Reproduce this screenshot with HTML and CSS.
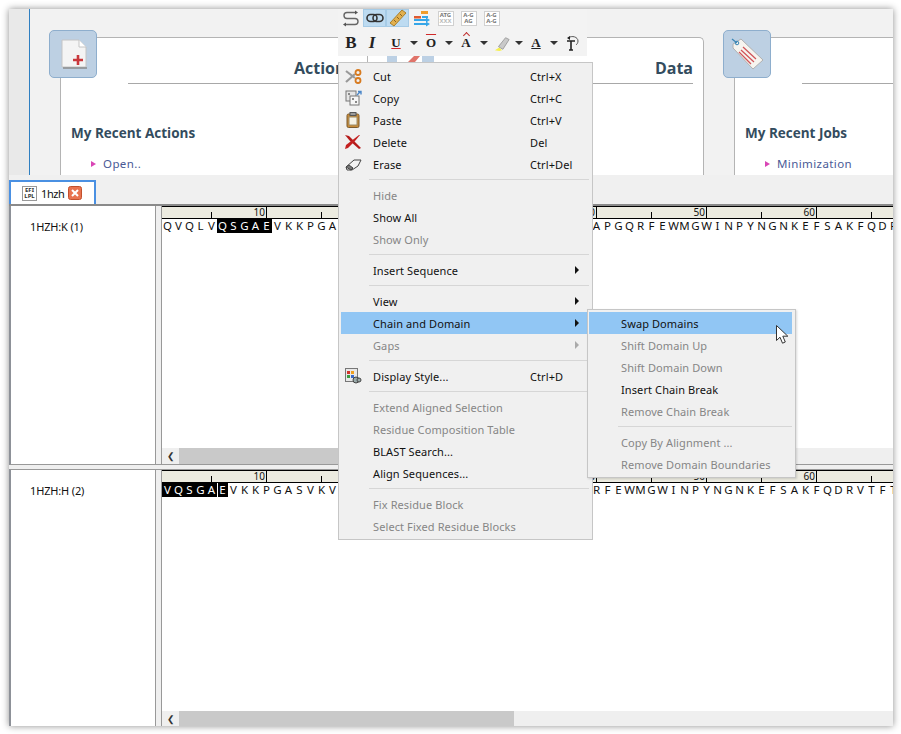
FILE: index.html
```html
<!DOCTYPE html>
<html lang="en">
<head>
<meta charset="utf-8">
<title>1hzh</title>
<link rel="stylesheet" href="styles.css">
</head>
<body>
<div class="window">
  <section class="top">
    <div class="strip"></div>
    <div class="card card-main">
      <div class="badge">
        <svg width="48" height="48" viewBox="0 0 48 48"><path d="M13 10h17l7 7v20H13z" fill="#f4f4f4" stroke="#c4c4c4"/><path d="M14 38h24" stroke="#8b8b8b" stroke-width="1.5"/><path d="M30 10v7h7" fill="#fff" stroke="#c4c4c4"/><path d="M24 30h10M29 25v10" stroke="#c9383c" stroke-width="2.6"/></svg>
      </div>
      <div class="card-head"><span>Actions</span><span>Data</span></div>
      <h3 class="recent">My Recent Actions</h3>
      <a class="recent-link"><i class="tri"></i>Open..</a>
    </div>
    <div class="card card-side">
      <div class="badge">
        <svg width="48" height="48" viewBox="0 0 48 48"><path d="M10 14l8-5 22 21-10 9-20-21z" fill="#f6f4ef" stroke="#b0b0b0"/><path d="M20 17l13 12M18 20l13 12M16 22l12 12" stroke="#d0555a" stroke-width="1.3"/><circle cx="14" cy="13" r="1.8" fill="none" stroke="#3b86b5"/><path d="M9 9l5 4" stroke="#3b86b5" stroke-width="1.3"/></svg>
      </div>
      <div class="card-head"></div>
      <h3 class="recent recent-side">My Recent Jobs</h3>
      <a class="recent-link recent-link-side"><i class="tri"></i>Minimization</a>
    </div>
  </section>

  <nav class="tabs">
    <div class="tab">
      <span class="tab-icon">EFI<br>LPL</span>
      <span class="tab-name">1hzh</span>
      <svg class="tab-close" width="14" height="14" viewBox="0 0 14 14"><rect x=".5" y=".5" width="13" height="13" rx="2" fill="#e8734f" stroke="#c2502c"/><path d="M4 4l6 6M10 4l-6 6" stroke="#fff" stroke-width="2"/></svg>
    </div>
  </nav>

  <div class="panes">
    <div class="pane pane-a">
      <div class="names">1HZH:K (1)</div>
      <div class="seq">
        <div class="ruler"><b>10</b><b>20</b><b>30</b><b>40</b><b>50</b><b>60</b><b></b></div>
        <div class="letters"><i>Q</i><i>V</i><i>Q</i><i>L</i><i>V</i><i class="on">Q</i><i class="on">S</i><i class="on">G</i><i class="on">A</i><i class="on">E</i><i>V</i><i>K</i><i>K</i><i>P</i><i>G</i><i>A</i><i>S</i><i>V</i><i>K</i><i>V</i><i>S</i><i>C</i><i>K</i><i>A</i><i>S</i><i>G</i><i>Y</i><i>Q</i><i>F</i><i>T</i><i>S</i><i>Y</i><i>R</i><i>M</i><i>H</i><i>W</i><i>V</i><i>R</i><i>Q</i><i>A</i><i>P</i><i>G</i><i>Q</i><i>R</i><i>F</i><i>E</i><i>W</i><i>M</i><i>G</i><i>W</i><i>I</i><i>N</i><i>P</i><i>Y</i><i>N</i><i>G</i><i>N</i><i>K</i><i>E</i><i>F</i><i>S</i><i>A</i><i>K</i><i>F</i><i>Q</i><i>D</i><i>R</i></div>
        <div class="scroll"><span class="scroll-btn">&#10094;</span><span class="thumb"></span></div>
      </div>
    </div>
    <div class="pane pane-b">
      <div class="names">1HZH:H (2)</div>
      <div class="seq">
        <div class="ruler"><b>10</b><b>20</b><b>30</b><b>40</b><b>50</b><b>60</b><b></b></div>
        <div class="letters"><i class="on">V</i><i class="on">Q</i><i class="on">S</i><i class="on">G</i><i class="on">A</i><i class="on caret">E</i><i>V</i><i>K</i><i>K</i><i>P</i><i>G</i><i>A</i><i>S</i><i>V</i><i>K</i><i>V</i><i>S</i><i>C</i><i>K</i><i>A</i><i>S</i><i>G</i><i>Y</i><i>Q</i><i>F</i><i>T</i><i>S</i><i>Y</i><i>R</i><i>M</i><i>H</i><i>W</i><i>V</i><i>R</i><i>Q</i><i>A</i><i>P</i><i>G</i><i>Q</i><i>R</i><i>F</i><i>E</i><i>W</i><i>M</i><i>G</i><i>W</i><i>I</i><i>N</i><i>P</i><i>Y</i><i>N</i><i>G</i><i>N</i><i>K</i><i>E</i><i>F</i><i>S</i><i>A</i><i>K</i><i>F</i><i>Q</i><i>D</i><i>R</i><i>V</i><i>T</i><i>F</i><i>T</i></div>
        <div class="scroll scroll-low"><span class="scroll-btn">&#10094;</span><span class="thumb"></span></div>
      </div>
    </div>
  </div>
</div>

<svg class="peek" width="70" height="6" viewBox="0 0 70 6"><rect width="70" height="6" fill="#fff"/><path d="M.5 0v6" stroke="#b5b5b5"/><rect x="20" width="10" height="6" fill="#bcd0e4"/><rect x="55" width="12" height="6" fill="#bcd0e4"/><path d="M41 6l6-6h6l-5 6z" fill="#e0746a"/></svg>

<div class="toolbar">
  <div class="tb-row tb-row-1">
    <span class="tb-i tb-w1"><svg width="18" height="17" viewBox="0 0 18 17"><path d="M12 2.500H4C0 2.500 0 8.500 4 8.500h8c4 0 4 6 0 6H3" fill="none" stroke="#666" stroke-width="1.400"/><path d="M3 12.500l-3 2 3 2zM12 .5l3 2-3 2z" fill="#555"/></svg></span>
    <span class="tb-i tb-w2 tb-on"><svg width="18" height="12" viewBox="0 0 18 12"><rect x="1" y="2.500" width="10" height="7" rx="3.500" fill="none" stroke="#333" stroke-width="1.600"/><rect x="7" y="2.500" width="10" height="7" rx="3.500" fill="none" stroke="#333" stroke-width="1.600"/></svg></span>
    <span class="tb-i tb-w2 tb-on"><svg width="18" height="18" viewBox="0 0 18 18"><path d="M1 14L13 1l4 3L5 17z" fill="#e2b04e" stroke="#a87f2c"/><path d="M5 11l2 2M8 8l2 2M11 5l2 2" stroke="#8a6420"/></svg></span>
    <span class="tb-i tb-w3"><svg width="17" height="17" viewBox="0 0 17 17"><rect x="8" y="1" width="7" height="3" fill="#ef9c2c"/><rect x="1" y="6" width="7" height="2.500" fill="#e05a30"/><path d="M9 7h6M1 10h13M1 14h13" stroke="#36a6e8" stroke-width="2.200"/><path d="M13 7.500l4 2.500-4 2.500zM13 11.500l4 2.500-4 2.500z" fill="#36a6e8"/></svg></span>
    <span class="tb-i tb-w4"><span class="tb-box">ATG<br><em>XXX</em></span></span>
    <span class="tb-i tb-w4"><span class="tb-box">A-G<br>AG</span></span>
    <span class="tb-i tb-w4"><span class="tb-box">A-G<br>A-G</span></span>
  </div>
  <div class="tb-row tb-row-2">
    <span class="tb-t tb-bold">B</span>
    <span class="tb-t tb-ital">I</span>
    <span class="tb-t tb-small tb-u">U</span><i class="drop"></i>
    <span class="tb-t tb-small tb-o">O</span><i class="drop"></i>
    <span class="tb-t tb-small tb-hat">A</span><i class="drop"></i>
    <span class="tb-t"><svg width="16" height="17" viewBox="0 0 18 17"><path d="M1 16l5-3 3 3-3 1z" fill="#f6f04a"/><path d="M5 12l8-10 4 2-7 11z" fill="#c9c9c9" stroke="#999"/></svg></span><i class="drop"></i>
    <span class="tb-t tb-small tb-a">A</span><i class="drop"></i>
    <span class="tb-t"><svg width="16" height="17" viewBox="0 0 16 17"><path d="M3 6h8M7 6v9M5 15h4" fill="none" stroke="#222" stroke-width="1.600"/><path d="M4 3c4-3 10-1 10 3 0 2-1 3-2 4" fill="none" stroke="#555"/><path d="M6 1L3 3l3 2z" fill="#222"/></svg></span>
  </div>
</div>

<div class="menu">
  <div class="mi"><span class="mi-ic"><svg width="17" height="15" viewBox="0 0 17 15"><path d="M1 2l9 7M1 13l9-8" stroke="#999" stroke-width="2.200"/><circle cx="13" cy="3.500" r="2.500" fill="none" stroke="#d77a1f" stroke-width="1.800"/><circle cx="13" cy="11.500" r="2.500" fill="none" stroke="#d77a1f" stroke-width="1.800"/></svg></span><span class="mi-l">Cut</span><span class="mi-k">Ctrl+X</span></div>
  <div class="mi"><span class="mi-ic"><svg width="17" height="16" viewBox="0 0 17 16"><rect x="1" y="1" width="10" height="10" fill="#e6e6e6" stroke="#777"/><rect x="5" y="6" width="9" height="9" fill="#f6f6f6" stroke="#777"/><path d="M3 3h2v2H3zM7 8h2v2H7zM10 11h2v2h-2z" fill="#888"/><path d="M12 5l3-3M13 1.500h3v3" fill="none" stroke="#4a86c8" stroke-width="1.400"/></svg></span><span class="mi-l">Copy</span><span class="mi-k">Ctrl+C</span></div>
  <div class="mi"><span class="mi-ic"><svg width="14" height="16" viewBox="0 0 14 16"><rect x="1" y="2" width="12" height="13.500" rx="1.500" fill="#c88a36" stroke="#7a5a2e"/><rect x="3" y="5" width="8" height="8" fill="#f5f1e4" stroke="#9a8a66"/><rect x="4" y="0.500" width="6" height="3" fill="#9a9a9a" stroke="#555"/></svg></span><span class="mi-l">Paste</span><span class="mi-k">Ctrl+V</span></div>
  <div class="mi"><span class="mi-ic"><svg width="16" height="16" viewBox="0 0 16 16"><path d="M0 1l4 1 12 12-2 1L5 7z" fill="#b51a1a"/><path d="M15 1l-1 0L1 11l-1 4 3-1 7-7z" fill="#c42020"/></svg></span><span class="mi-l">Delete</span><span class="mi-k">Del</span></div>
  <div class="mi"><span class="mi-ic"><svg width="17" height="13" viewBox="0 0 17 13"><path d="M1 9l8-7h7l-3 6-6 4H2z" fill="#f4f4f4" stroke="#444"/><path d="M1 9l5 3 2-2-4-3z" fill="#777" stroke="#444"/></svg></span><span class="mi-l">Erase</span><span class="mi-k">Ctrl+Del</span></div>
  <div class="ms"></div>
  <div class="mi off"><span class="mi-ic"></span><span class="mi-l">Hide</span></div>
  <div class="mi"><span class="mi-ic"></span><span class="mi-l">Show All</span></div>
  <div class="mi off"><span class="mi-ic"></span><span class="mi-l">Show Only</span></div>
  <div class="ms"></div>
  <div class="mi"><span class="mi-ic"></span><span class="mi-l">Insert Sequence</span><i class="mi-a"></i></div>
  <div class="ms"></div>
  <div class="mi"><span class="mi-ic"></span><span class="mi-l">View</span><i class="mi-a"></i></div>
  <div class="mi hot"><span class="mi-ic"></span><span class="mi-l">Chain and Domain</span><i class="mi-a"></i></div>
  <div class="mi off"><span class="mi-ic"></span><span class="mi-l">Gaps</span><i class="mi-a"></i></div>
  <div class="ms"></div>
  <div class="mi"><span class="mi-ic"><svg width="17" height="16" viewBox="0 0 17 16"><rect x=".5" y=".5" width="12" height="13" fill="#e8e8e8" stroke="#777"/><path d="M2 3h3v3H2z" fill="#d0342c"/><path d="M6 3h3v3H6z" fill="#f0a020"/><path d="M2 7h3v3H2z" fill="#3a9a40"/><path d="M6 7h3v3H6z" fill="#3a6ac8"/><circle cx="11" cy="12" r="3" fill="#9aa" stroke="#444"/><circle cx="14" cy="12" r="2" fill="#9aa" stroke="#444"/></svg></span><span class="mi-l">Display Style...</span><span class="mi-k">Ctrl+D</span></div>
  <div class="ms"></div>
  <div class="mi off"><span class="mi-ic"></span><span class="mi-l">Extend Aligned Selection</span></div>
  <div class="mi off"><span class="mi-ic"></span><span class="mi-l">Residue Composition Table</span></div>
  <div class="mi"><span class="mi-ic"></span><span class="mi-l">BLAST Search...</span></div>
  <div class="mi"><span class="mi-ic"></span><span class="mi-l">Align Sequences...</span></div>
  <div class="ms"></div>
  <div class="mi off"><span class="mi-ic"></span><span class="mi-l">Fix Residue Block</span></div>
  <div class="mi off"><span class="mi-ic"></span><span class="mi-l">Select Fixed Residue Blocks</span></div>
</div>

<div class="menu submenu">
  <div class="mi hot"><span class="mi-ic"></span><span class="mi-l">Swap Domains</span></div>
  <div class="mi off"><span class="mi-ic"></span><span class="mi-l">Shift Domain Up</span></div>
  <div class="mi off"><span class="mi-ic"></span><span class="mi-l">Shift Domain Down</span></div>
  <div class="mi"><span class="mi-ic"></span><span class="mi-l">Insert Chain Break</span></div>
  <div class="mi off"><span class="mi-ic"></span><span class="mi-l">Remove Chain Break</span></div>
  <div class="ms"></div>
  <div class="mi off"><span class="mi-ic"></span><span class="mi-l">Copy By Alignment ...</span></div>
  <div class="mi off"><span class="mi-ic"></span><span class="mi-l">Remove Domain Boundaries</span></div>
</div>

<svg class="pointer" width="14" height="20" viewBox="0 0 14 20"><path d="M.5.5v15l3.500-3.300 2.500 6 2.800-1.200-2.500-5.800h5z" fill="#fff" stroke="#333"/></svg>
</body>
</html>
```

FILE: styles.css
```css
* { box-sizing: border-box; }
html, body { margin: 0; height: 100%; }
body {
  position: relative;
  width: 901px;
  height: 734px;
  overflow: hidden;
  padding: 9px 8px 8px 9px;
  background: #fff;
  font-family: "Noto Sans", sans-serif;
  font-size: 11px;
  color: #111;
}
.window {
  display: flex;
  flex-direction: column;
  width: 884px;
  height: 717px;
  background: #f0f0f0;
  box-shadow: 0 0 7px rgba(0, 0, 0, .45);
}

/* top welcome area */
.top {
  display: flex;
  flex: 0 0 166px;
  overflow: hidden;
  background: #f2f2f2;
}
.strip {
  flex: 0 0 21px;
  margin-right: 30px;
  background: #e9e9e9;
  border-right: 1px solid #2f7fc1;
}
.card {
  position: relative;
  flex: none;
  margin-top: 28px;
  height: 160px;
  background: #fff;
  border: 1px solid #b4b4b4;
  border-bottom: 0;
  border-radius: 0 5px 0 0;
}
.card-main { width: 644px; margin-right: 30px; }
.card-side { width: 180px; border-right: 0; }
.badge {
  position: absolute;
  left: -12px;
  top: -8px;
  width: 48px;
  height: 48px;
  background: #bdd0e3;
  border: 1px solid #8eaecd;
  border-radius: 5px;
}
.badge svg { display: block; margin: -1px; }
.card-head {
  display: flex;
  justify-content: space-between;
  align-items: flex-end;
  height: 46px;
  margin: 0 10px 0 67px;
  padding: 0 0 4px 166px;
  border-bottom: 1px solid #a8a8a8;
  font-family: "Open Sans", sans-serif;
  font-size: 16px;
  font-weight: 700;
  color: #334c5e;
}
.card-side .card-head { margin-right: 0; }
.recent {
  margin: 40px 0 0 10px;
  font-family: "Open Sans", sans-serif;
  font-size: 13.500px;
  font-weight: 700;
  line-height: 18px;
  color: #334c5e;
}
.recent-link {
  display: flex;
  align-items: center;
  margin: 14px 0 0 30px;
  line-height: 16px;
  font-size: 11.500px;
  letter-spacing: .4px;
  color: #4a5a96;
}
.tri {
  width: 0;
  height: 0;
  margin-right: 7px;
  border-left: 5px solid #d945b5;
  border-top: 3px solid transparent;
  border-bottom: 3px solid transparent;
}

/* tab strip */
.tabs {
  display: flex;
  flex: 0 0 29px;
  padding-top: 5px;
  background: #f0f0f0;
}
.tab {
  display: flex;
  align-items: center;
  width: 87px;
  height: 24px;
  padding: 0 0 0 11px;
  background: #fff;
  border: 2px solid #4a90e2;
  border-bottom: 0;
}
.tab-icon {
  width: 15px;
  height: 15px;
  border: 1px solid #999;
  font-size: 6px;
  font-weight: 700;
  line-height: 6.500px;
  text-align: center;
  color: #333;
}
.tab-name {
  width: 22px;
  margin: 0 5px 0 4px;
  font-size: 11px;
  letter-spacing: -.4px;
  color: #111;
}

/* sequence panes */
.panes {
  display: flex;
  flex-direction: column;
  flex: 1;
  min-height: 0;
  border-top: 2px solid #8a8a8a;
  background: #efefef;
}
.pane {
  display: flex;
  min-height: 0;
  border-left: 2px solid #8d9198;
}
.pane-a { flex: 0 0 259px; border-bottom: 1px solid #999; margin-bottom: 4px; }
.pane-b { flex: 1; border-top: 1px solid #999; }
.names {
  flex: 0 0 145px;
  padding: 13px 0 0 19px;
  background: #fff;
  border-right: 1px solid #999;
  font-size: 11px;
  letter-spacing: -.15px;
  line-height: 15px;
  color: #111;
}
.seq {
  display: flex;
  flex-direction: column;
  flex: 1;
  min-width: 0;
  margin-left: 5px;
  overflow: hidden;
  background: #fff;
  border-left: 1px solid #999;
}
.ruler {
  display: flex;
  flex: 0 0 13px;
  margin-left: -5px;
  background: #ecebe0;
  border-top: 1px solid #000;
  border-bottom: 1px solid #000;
}
.ruler b {
  flex: 0 0 110px;
  height: 11px;
  padding-right: 1px;
  border-right: 1px solid #000;
  background: linear-gradient(#000, #000) no-repeat 54px 100% / 1px 6px;
  font-size: 10px;
  font-weight: 400;
  line-height: 11px;
  text-align: right;
  color: #111;
}
.letters {
  display: flex;
  flex: 1;
  align-items: flex-start;
}
.letters i {
  flex: 0 0 11px;
  height: 14px;
  font-size: 11.500px;
  font-style: normal;
  line-height: 14px;
  text-align: center;
  color: #111;
}
.letters .on { background: #000; color: #fff; }
.letters .caret { box-shadow: inset 1px 0 #fff; }
.scroll {
  display: flex;
  flex: 0 0 16px;
  background: #efefef;
}
.scroll-low { flex-basis: 14px; }
.scroll-btn {
  flex: 0 0 17px;
  font-size: 9px;
  line-height: 15px;
  text-align: center;
  color: #333;
}
.thumb { flex: 0 0 335px; background: #c9c9c9; }

/* floating toolbar */
.peek { position: absolute; left: 367px; top: 56px; }
.toolbar {
  position: absolute;
  left: 338px;
  top: 9px;
  width: 249px;
  height: 47px;
  background: #f3f3f3;
}
.tb-row { display: flex; align-items: center; }
.tb-row-1 { height: 18px; padding-left: 3px; }
.tb-row-2 { height: 20px; margin-top: 6px; padding-left: 4px; }
.tb-i { display: flex; align-items: center; justify-content: center; height: 18px; }
.tb-w1 { width: 22px; }
.tb-w2 { width: 23px; }
.tb-w3 { width: 25px; }
.tb-w4 { width: 23px; }
.tb-on { background: #bddbf1; border: 1px solid #a6cbe6; }
.tb-box {
  width: 16px;
  height: 15px;
  background: #fff;
  border: 1px solid #d0d0d0;
  font-size: 6px;
  font-weight: 700;
  line-height: 6.500px;
  text-align: center;
  color: #777;
}
.tb-box em { font-style: normal; color: #bbb; }
.tb-t {
  display: flex;
  align-items: center;
  justify-content: center;
  height: 20px;
  font-family: "Liberation Serif", serif;
  font-size: 17px;
  color: #222;
}
.tb-bold { width: 18px; font-weight: 700; }
.tb-ital { width: 24px; font-style: italic; font-weight: 700; }
.tb-small { width: 18px; font-size: 13px; font-weight: 700; margin-left: 3px; }
.tb-t svg { margin-left: 5px; }
.tb-u { text-decoration: underline; text-decoration-color: #d02a2a; }
.tb-o { text-decoration: overline; text-decoration-color: #d02a2a; }
.tb-hat { position: relative; }
.tb-hat::before {
  content: "";
  position: absolute;
  left: 7px;
  top: 0;
  width: 4px;
  height: 4px;
  border-left: 1px solid #c03030;
  border-top: 1px solid #c03030;
  transform: rotate(45deg);
}
.tb-a { text-decoration: underline; }
.drop {
  width: 0;
  height: 0;
  margin-left: 5px;
  margin-right: 1px;
  border-top: 4px solid #333;
  border-left: 4px solid transparent;
  border-right: 4px solid transparent;
}

/* context menus */
.menu {
  position: absolute;
  left: 338px;
  top: 62px;
  width: 255px;
  height: 478px;
  padding: 2px 0;
  background: #f0f0f0;
  border: 1px solid #c6c6c6;
  font-family: "Noto Sans", sans-serif;
  font-size: 11px;
  letter-spacing: .1px;
}
.submenu {
  left: 587px;
  top: 309px;
  width: 209px;
  height: 169px;
  box-shadow: 1px 1px 2px rgba(0, 0, 0, .15);
}
.mi {
  display: flex;
  align-items: center;
  height: 22px;
  margin: 0 3px 0 2px;
  color: #111;
}
.submenu .mi { margin: 0 3px 0 1px; }
.mi-ic {
  display: flex;
  align-items: center;
  justify-content: center;
  flex: 0 0 32px;
  height: 22px;
  padding-right: 8px;
}
.mi-l { flex: 1; white-space: nowrap; }
.mi-k { flex: 0 0 59px; white-space: nowrap; }
.mi-a {
  flex: none;
  width: 0;
  height: 0;
  margin-right: 10px;
  border-left: 4px solid #111;
  border-top: 4px solid transparent;
  border-bottom: 4px solid transparent;
}
.off { color: #868686; }
.off .mi-a { border-left-color: #aaa; }
.hot { background: #91c6f4; }
.ms {
  height: 1px;
  margin: 4px 3px 4px 30px;
  background: #d6d6d6;
}
.pointer { position: absolute; left: 776px; top: 325px; }
```
